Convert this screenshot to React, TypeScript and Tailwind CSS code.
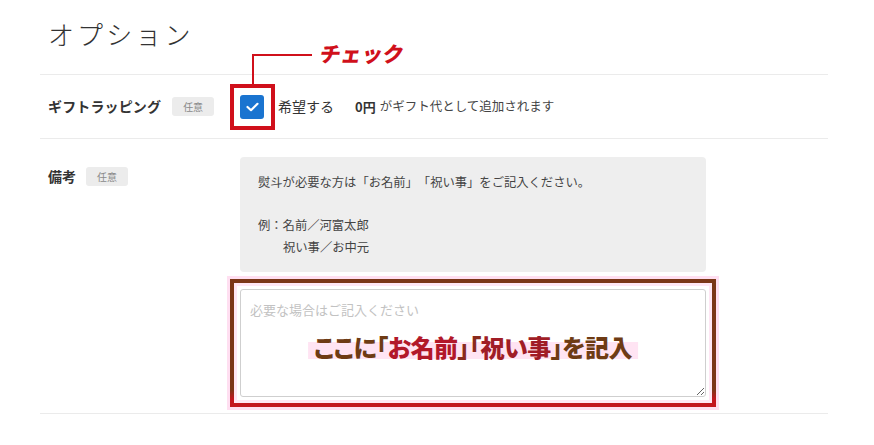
const jp = "font-['Noto_Sans_CJK_JP','Noto_Sans',sans-serif]";

function Badge() {
  return (
    <span className="inline-flex h-[19px] w-[42px] items-center justify-center rounded-[3px] bg-[#ececec] text-[10px] text-[#8a8a8a]">
      任意
    </span>
  );
}

export default function App() {
  return (
    <div className={`relative h-[445px] w-[874px] overflow-hidden bg-white text-[#333] ${jp}`}>
      <div className="ml-[40px] w-[788px]">
        <h1 className="h-[74px] pl-[8px] pt-[14px] text-[26px] font-light leading-[40px] tracking-[0.12em] text-[#333]">
          オプション
        </h1>

        {/* gift wrapping */}
        <div className="flex h-[64px] items-center border-t border-[#ebebeb]">
          <div className="flex w-[200px] items-center gap-[11px] pl-[8px]">
            <span className="text-[14px] font-bold tracking-[0.01em]">ギフトラッピング</span>
            <Badge />
          </div>
          <div className="relative flex items-center">
            <span className="flex h-[24px] w-[24px] items-center justify-center rounded-[3px] bg-[#1a74d0]">
              <svg width="13" height="10" viewBox="0 0 13 10" fill="none">
                <path d="M1.5 5 L5 8.2 L11.5 1.8" stroke="white" strokeWidth="2.2" strokeLinecap="round" strokeLinejoin="round" />
              </svg>
            </span>
            {/* annotation: check */}
            <span className="absolute left-[-10px] top-[-11px] h-[46px] w-[45px] border-[4px] border-[#d0101b]" />
            <span className="absolute left-[12px] top-[-41px] h-[31px] w-[2px] bg-[#d0101b]" />
            <span className="absolute left-[12px] top-[-41px] h-[2px] w-[60px] bg-[#d0101b]" />
            <span className="absolute left-[80px] top-[-57px] -skew-x-[10deg] whitespace-nowrap text-[21px] font-black leading-[30px] text-[#d0101b]">
              チェック
            </span>
            <span className="ml-[14px] text-[14px]">希望する</span>
            <span className="ml-[21px] text-[13px] font-bold">0円</span>
            <span className="ml-[4px] text-[12.5px] text-[#444]">がギフト代として追加されます</span>
          </div>
        </div>

        {/* notes */}
        <div className="flex h-[276px] border-y border-[#ebebeb] pt-[18px]">
          <div className="flex h-[38px] w-[200px] items-center gap-[10px] pl-[8px]">
            <span className="text-[14px] font-bold">備考</span>
            <Badge />
          </div>
          <div className="w-[466px]">
            <div className="h-[115px] rounded-[4px] bg-[#eeeeee] px-[18px] pt-[15px] text-[12.3px] leading-[21.5px] text-[#444] [text-spacing-trim:space-all]">
              <p>熨斗が必要な方は「お名前」「祝い事」をご記入ください。</p>
              <p className="h-[21.5px]" />
              <p>例：名前／河富太郎</p>
              <p className="pl-[25px]">祝い事／お中元</p>
            </div>
            <div className="relative mt-[17px]">
              <textarea
                placeholder="必要な場合はご記入ください"
                className="block h-[108px] w-full resize-y rounded-[3px] border border-[#cfcfcf] bg-white px-[9px] py-[10px] text-[13px] placeholder:text-[#c2c2c2]"
              />
              {/* annotation frame */}
              <span className="pointer-events-none absolute -inset-[10px] border-[4px] shadow-[0_0_0_3px_#ffdff1,inset_0_0_0_3px_#ffe6f4] [border-image:linear-gradient(to_bottom,#7b3617_88%,#c3161f_96%)_1]" />
              <span className="pointer-events-none absolute left-1/2 top-[43px] -translate-x-1/2 whitespace-nowrap bg-[linear-gradient(to_bottom,transparent_35%,#ffe4f3_35%,#ffe4f3_90%,transparent_90%)] px-[6px] text-[24px] font-black leading-[30px] tracking-[-0.02em] [font-feature-settings:'palt']">
                <span className="text-[#6e3b14]">ここに「</span>
                <span className="text-[#b2182a]">お名前</span>
                <span className="text-[#8a2a1c]">」「</span>
                <span className="text-[#a01d26]">祝い事</span>
                <span className="text-[#6e3b14]">」を記入</span>
              </span>
            </div>
          </div>
        </div>
      </div>
    </div>
  );
}
